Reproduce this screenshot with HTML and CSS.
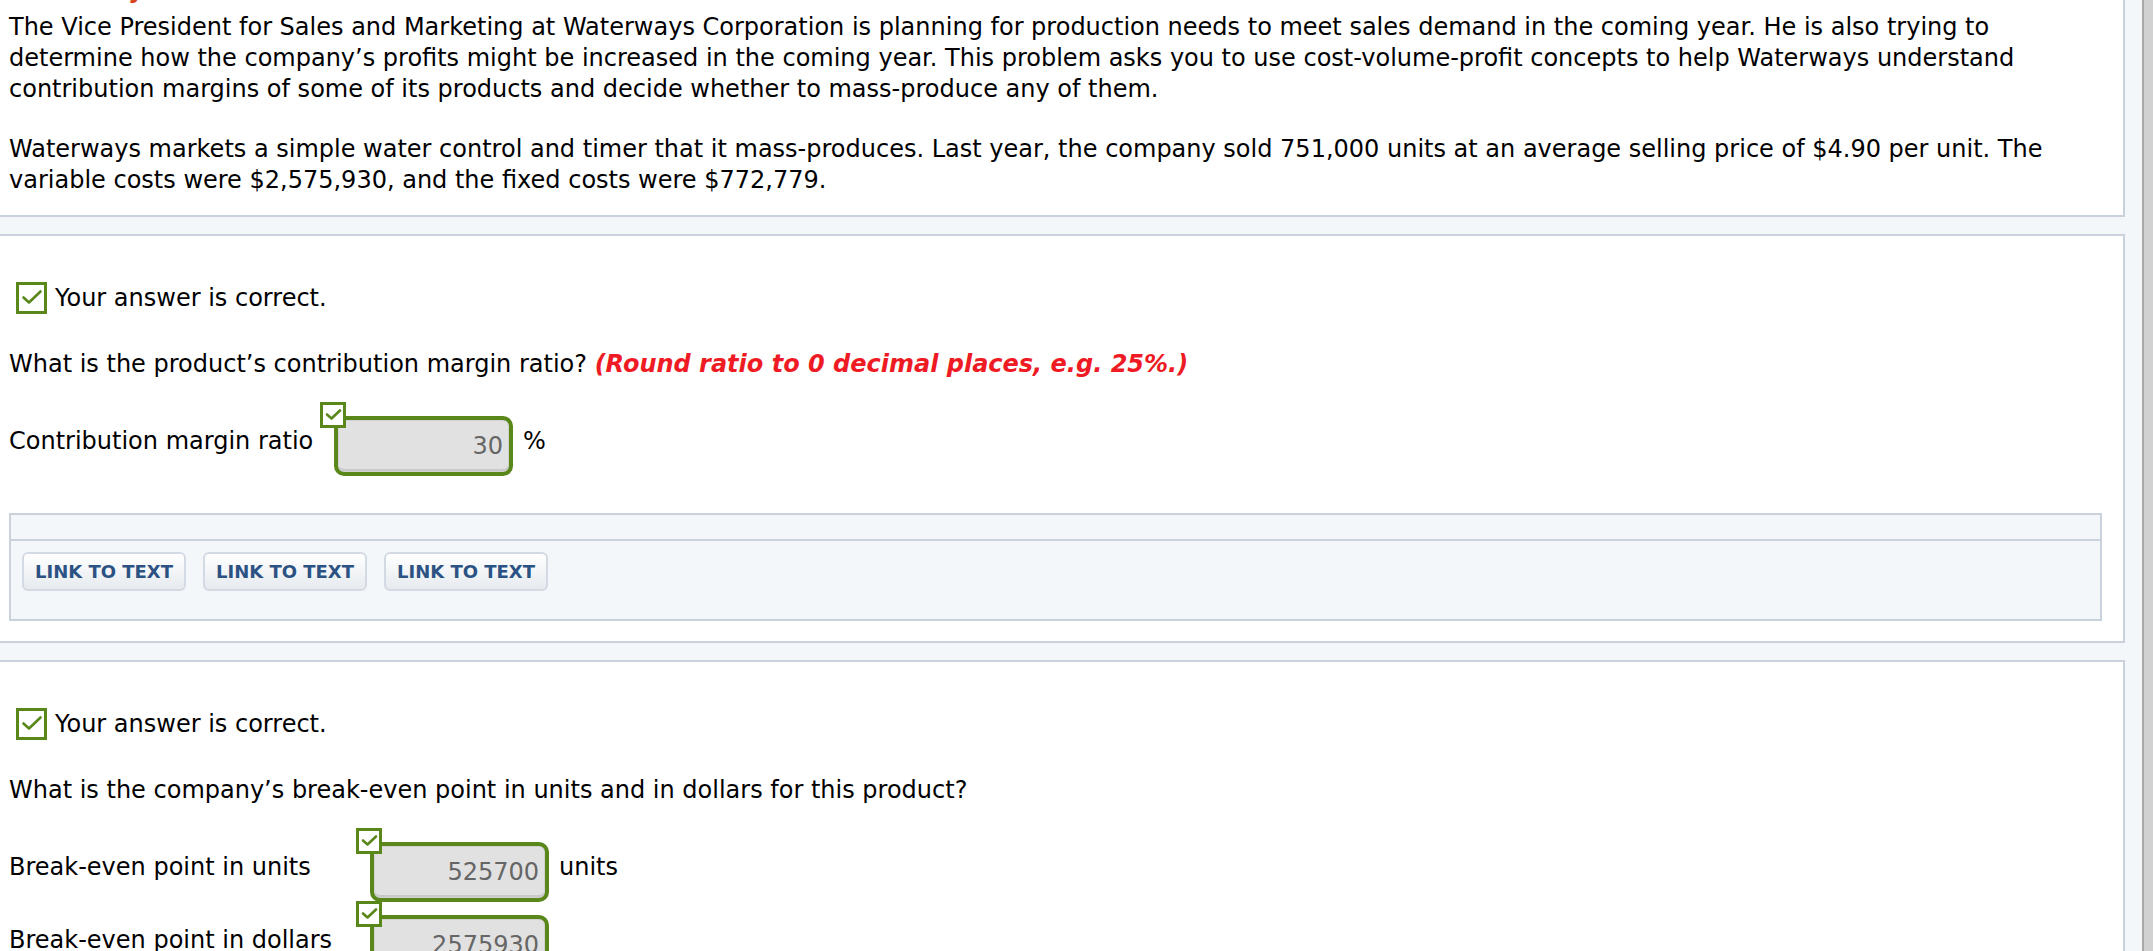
FILE: index.html
```html
<!DOCTYPE html>
<html lang="en">
<head>
<meta charset="utf-8">
<title>Waterways Problem</title>
<link rel="stylesheet" href="styles.css">
</head>
<body>
<div class="page">
  <main class="content">
    <section class="panel panel-intro">
      <h2 class="title">Waterways Problem</h2>
      <p class="text">The Vice President for Sales and Marketing at Waterways Corporation is planning for production needs to meet sales demand in the coming year. He is also trying to<br>determine how the company’s profits might be increased in the coming year. This problem asks you to use cost-volume-profit concepts to help Waterways understand<br>contribution margins of some of its products and decide whether to mass-produce any of them.</p>
      <p class="text text-gap">Waterways markets a simple water control and timer that it mass-produces. Last year, the company sold 751,000 units at an average selling price of $4.90 per unit. The<br>variable costs were $2,575,930, and the fixed costs were $772,779.</p>
    </section>

    <section class="panel panel-question">
      <div class="status">
        <svg class="check-lg" viewBox="0 0 31 32" aria-hidden="true"><rect x="1.5" y="1.5" width="28" height="29" fill="#fff" stroke="#5a871a" stroke-width="3"/><polyline points="7.5,15.5 13,20.5 24.5,9.5" fill="none" stroke="#5a871a" stroke-width="2.6" stroke-linecap="round" stroke-linejoin="round"/></svg>
        <span>Your answer is correct.</span>
      </div>
      <p class="question">What is the product’s contribution margin ratio? <em class="hint">(Round ratio to 0 decimal places, e.g. 25%.)</em></p>
      <div class="answers answers-ratio">
        <div class="row">
          <span class="label">Contribution margin ratio</span>
          <span class="field">
            <svg class="check-sm" viewBox="0 0 26 26" aria-hidden="true"><rect x="1.5" y="1.5" width="23" height="23" fill="#fff" stroke="#5a871a" stroke-width="3"/><polyline points="7,12.5 11.5,16.5 20,8.5" fill="none" stroke="#5a871a" stroke-width="2.6" stroke-linecap="round" stroke-linejoin="round"/></svg>
            <span class="input">30</span>
          </span>
          <span class="unit">%</span>
        </div>
      </div>
      <div class="links">
        <div class="links-head"></div>
        <div class="links-body">
          <button class="link-btn" type="button">LINK TO TEXT</button>
          <button class="link-btn" type="button">LINK TO TEXT</button>
          <button class="link-btn" type="button">LINK TO TEXT</button>
        </div>
      </div>
    </section>

    <section class="panel panel-question">
      <div class="status">
        <svg class="check-lg" viewBox="0 0 31 32" aria-hidden="true"><rect x="1.5" y="1.5" width="28" height="29" fill="#fff" stroke="#5a871a" stroke-width="3"/><polyline points="7.5,15.5 13,20.5 24.5,9.5" fill="none" stroke="#5a871a" stroke-width="2.6" stroke-linecap="round" stroke-linejoin="round"/></svg>
        <span>Your answer is correct.</span>
      </div>
      <p class="question">What is the company’s break-even point in units and in dollars for this product?</p>
      <div class="answers answers-breakeven">
        <div class="row">
          <span class="label">Break-even point in units</span>
          <span class="field">
            <svg class="check-sm" viewBox="0 0 26 26" aria-hidden="true"><rect x="1.5" y="1.5" width="23" height="23" fill="#fff" stroke="#5a871a" stroke-width="3"/><polyline points="7,12.5 11.5,16.5 20,8.5" fill="none" stroke="#5a871a" stroke-width="2.6" stroke-linecap="round" stroke-linejoin="round"/></svg>
            <span class="input">525700</span>
          </span>
          <span class="unit">units</span>
        </div>
        <div class="row">
          <span class="label">Break-even point in dollars</span>
          <span class="field">
            <svg class="check-sm" viewBox="0 0 26 26" aria-hidden="true"><rect x="1.5" y="1.5" width="23" height="23" fill="#fff" stroke="#5a871a" stroke-width="3"/><polyline points="7,12.5 11.5,16.5 20,8.5" fill="none" stroke="#5a871a" stroke-width="2.6" stroke-linecap="round" stroke-linejoin="round"/></svg>
            <span class="input">2575930</span>
          </span>
          <span class="unit"></span>
        </div>
      </div>
    </section>
  </main>
  <div class="scrollbar"></div>
</div>
</body>
</html>
```

FILE: styles.css
```css
html, body {
  margin: 0;
  padding: 0;
}

body {
  background: #f4f7fa;
  color: #000;
  font-family: "DejaVu Sans", Verdana, sans-serif;
  font-size: 24px;
  line-height: 31px;
  overflow: hidden;
}

.page {
  display: flex;
  height: 951px;
  overflow: hidden;
}

.content {
  flex: 1;
  min-width: 0;
  padding-right: 17px;
  display: flex;
  flex-direction: column;
  gap: 17px;
}

.panel {
  background: #fff;
  border: 2px solid #c9d1dc;
  border-left: 0;
  padding: 0 21px 0 9px;
  flex-shrink: 0;
}

.panel-intro {
  border-top: 0;
  padding-bottom: 19px;
}

.title {
  margin: -25px 0 0;
  font-size: 24px;
  line-height: 31px;
  font-weight: bold;
  color: #d8451c;
  white-space: nowrap;
}

.text {
  margin: 6px 0 0;
}

.text-gap {
  margin-top: 29px;
}

.panel-question {
  padding-top: 46px;
  padding-bottom: 20px;
}

.status {
  display: flex;
  align-items: center;
  gap: 8px;
  padding-left: 7px;
}

.check-lg {
  display: block;
  width: 31px;
  height: 32px;
  flex-shrink: 0;
}

.question {
  margin: 35px 0 0;
}

.hint {
  color: #ee1b24;
  font-weight: bold;
  font-style: italic;
}

.answers {
  margin-top: 36px;
  display: flex;
  flex-direction: column;
  gap: 13px;
}

.row {
  display: grid;
  align-items: start;
}

.answers-ratio .row {
  grid-template-columns: 325px 179px auto;
}

.answers-breakeven .row {
  grid-template-columns: 361px 179px auto;
}

.label {
  margin-top: 10px;
  white-space: nowrap;
}

.field {
  position: relative;
  display: block;
}

.check-sm {
  position: absolute;
  left: -14px;
  top: -14px;
  width: 26px;
  height: 26px;
  display: block;
  z-index: 1;
}

.input {
  display: block;
  box-sizing: border-box;
  height: 60px;
  border: 4px solid #5a871a;
  border-radius: 10px;
  background: #e1e1e1;
  box-shadow: inset 0 0 0 1px #d2d2d2, inset 0 -3px 0 #c9c9c9;
  color: #666;
  text-align: right;
  padding-right: 6px;
  line-height: 52px;
}

.unit {
  margin-top: 10px;
  margin-left: 10px;
}

.links {
  margin-top: 37px;
  border: 2px solid #c9d1dc;
  background: #f4f7fa;
}

.links-head {
  height: 24px;
  border-bottom: 2px solid #c9d1dc;
}

.links-body {
  display: flex;
  gap: 17px;
  padding: 11px 11px 28px;
}

.link-btn {
  box-sizing: border-box;
  width: 164px;
  height: 39px;
  padding: 0;
  border: 2px solid #d3dae3;
  border-radius: 6px;
  background: linear-gradient(#ffffff, #e6eaef);
  color: #2b5283;
  font-family: "DejaVu Sans", Verdana, sans-serif;
  font-size: 18px;
  font-weight: bold;
  line-height: 35px;
  text-align: center;
}

.scrollbar {
  width: 9px;
  flex-shrink: 0;
  border-left: 2px solid #a8a8a8;
  background: #d1d1d1;
}
```
